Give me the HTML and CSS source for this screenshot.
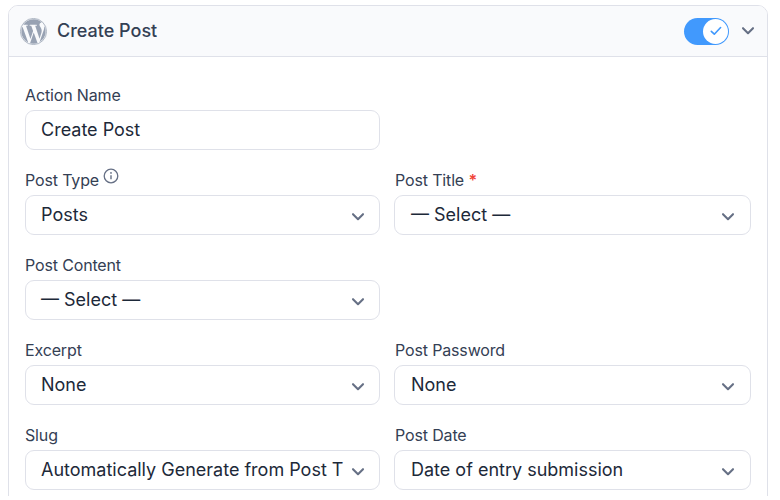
FILE: index.html
```html
<!DOCTYPE html>
<html lang="en">
<head>
<meta charset="utf-8">
<title>Create Post</title>
<link rel="stylesheet" href="styles.css">
</head>
<body>
<svg class="defs" width="0" height="0"><symbol id="chevron" viewBox="0 0 14 10"><path d="M2 2.2 7 7.2 12 2.2" fill="none" stroke="currentColor" stroke-width="2.1" stroke-linecap="round" stroke-linejoin="round"/></symbol></svg>
<section class="panel">
  <header class="panel-header">
    <svg class="logo" viewBox="0 0 24 24"><circle cx="12" cy="12" r="11.6" fill="none" stroke="currentColor" stroke-width=".7"/><path fill="currentColor" d="M21.469 6.825c.84 1.537 1.318 3.3 1.318 5.175 0 3.979-2.156 7.456-5.363 9.325l3.295-9.527c.615-1.54.82-2.771.82-3.864 0-.405-.026-.78-.07-1.11m-7.981.105c.647-.03 1.232-.105 1.232-.105.582-.075.514-.93-.067-.899 0 0-1.755.135-2.88.135-1.064 0-2.85-.15-2.85-.15-.585-.03-.661.855-.075.885 0 0 .54.061 1.125.09l1.68 4.605-2.37 7.08L5.354 6.9c.649-.03 1.234-.1 1.234-.1.585-.075.516-.93-.065-.896 0 0-1.746.138-2.874.138-.2 0-.438-.008-.69-.015C4.911 3.15 8.235 1.215 12 1.215c2.809 0 5.365 1.072 7.286 2.833-.046-.003-.091-.009-.141-.009-1.06 0-1.812.923-1.812 1.914 0 .89.513 1.643 1.06 2.531.411.72.89 1.643.89 2.977 0 .915-.354 1.994-.821 3.479l-1.075 3.585-3.9-11.61zM12 22.784c-1.059 0-2.081-.153-3.048-.437l3.237-9.406 3.315 9.087c.024.053.05.101.078.149-1.12.393-2.325.609-3.582.609M1.211 12c0-1.564.336-3.05.935-4.39L7.29 21.709C3.694 19.96 1.212 16.271 1.211 12"/></svg>
    <h1 class="title">Create Post</h1>
    <span class="toggle"><span class="knob"><svg width="12" height="10" viewBox="0 0 12 10"><path d="M1.3 5.3 4.3 8.2 10.6 1.5" fill="none" stroke="currentColor" stroke-width="1.6" stroke-linecap="round" stroke-linejoin="round"/></svg></span></span>
    <svg class="chevron"><use href="#chevron"/></svg>
  </header>
  <div class="fields">
    <div class="field first"><div class="label">Action Name</div><div class="control">Create Post</div></div>
    <div class="field first"><div class="label">Post Type<svg class="info" viewBox="0 0 16 16"><circle cx="8" cy="8" r="6.8" fill="none" stroke="currentColor" stroke-width="1.3"/><path d="M8 7.3v4" stroke="currentColor" stroke-width="1.4"/><circle cx="8" cy="4.9" r=".9" fill="currentColor"/></svg></div><div class="control"><span class="value">Posts</span><svg class="chevron"><use href="#chevron"/></svg></div></div>
    <div class="field"><div class="label">Post Title <span class="required">*</span></div><div class="control"><span class="value">— Select —</span><svg class="chevron"><use href="#chevron"/></svg></div></div>
    <div class="field first"><div class="label">Post Content</div><div class="control"><span class="value">— Select —</span><svg class="chevron"><use href="#chevron"/></svg></div></div>
    <div class="field first"><div class="label">Excerpt</div><div class="control"><span class="value">None</span><svg class="chevron"><use href="#chevron"/></svg></div></div>
    <div class="field"><div class="label">Post Password</div><div class="control"><span class="value">None</span><svg class="chevron"><use href="#chevron"/></svg></div></div>
    <div class="field first"><div class="label">Slug</div><div class="control"><span class="value">Automatically Generate from Post T</span><svg class="chevron"><use href="#chevron"/></svg></div></div>
    <div class="field"><div class="label">Post Date</div><div class="control"><span class="value">Date of entry submission</span><svg class="chevron"><use href="#chevron"/></svg></div></div>
  </div>
</section>
</body>
</html>
```
FILE: styles.css
```css
* { box-sizing: border-box; }
body {
  margin: 0;
  padding: 5px 12px 0 8px;
  height: 496px;
  overflow: hidden;
  background: #fff;
  color: #1d2939;
  font-family: Inter, "Liberation Sans", sans-serif;
}
html { overflow: hidden; background: #fff; }
.defs { position: absolute; }
.panel {
  height: 520px;
  border: 1px solid #dfe1e9;
  border-radius: 10px;
  overflow: hidden;
}
.panel-header {
  display: flex;
  align-items: center;
  height: 51px;
  padding: 0 12px 0 11px;
  background: #f9fafc;
  border-bottom: 1px solid #dfe1e9;
}
.logo { width: 27px; height: 27px; color: #98a2b3; }
.title {
  flex: 1;
  margin: 0 0 0 10px;
  font-size: 18px;
  font-weight: 500;
  line-height: 24px;
  color: #344054;
}
.toggle {
  display: flex;
  justify-content: flex-end;
  width: 45px;
  height: 27px;
  padding: 1px;
  border-radius: 14px;
  background: #4199fd;
  margin-right: 12px;
}
.knob {
  display: flex;
  align-items: center;
  justify-content: center;
  width: 25px;
  height: 25px;
  border-radius: 50%;
  background: #fff;
  color: #4199fd;
}
.chevron { flex: none; width: 14px; height: 10px; color: #667085; }
.fields {
  display: grid;
  grid-template-columns: 355px 357px;
  gap: 20px 14px;
  padding: 28px 16px;
}
.field.first { grid-column: 1; }
.label {
  display: flex;
  height: 20px;
  margin-bottom: 5px;
  font-size: 16px;
  line-height: 20px;
  letter-spacing: -0.15px;
  color: #344054;
  white-space: pre;
}
.field:not(.first) .label { padding-left: 1px; }
.required { color: #f04438; font-weight: 600; }
.info { width: 16px; height: 16px; margin: -2px 0 0 4px; color: #667085; }
.control {
  display: flex;
  align-items: center;
  height: 40px;
  padding: 0 14px 0 15px;
  border: 1px solid #dfe1e9;
  border-radius: 9px;
  font-size: 18px;
  line-height: 24px;
}
.field:not(.first) .control { padding: 0 15px 0 16px; }
.value { flex: 1; white-space: nowrap; }
.control .chevron { margin-top: 3px; }
```
